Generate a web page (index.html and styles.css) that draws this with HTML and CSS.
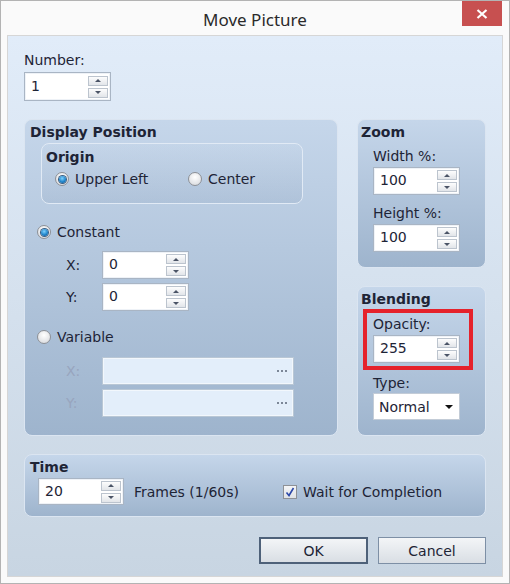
FILE: index.html
```html
<!DOCTYPE html>
<html lang="en">
<head>
  <meta charset="UTF-8">
  <title>Move Picture</title>
  <link rel="stylesheet" href="styles.css">
</head>
<body>
<div class="window">
  <div class="titlebar">
    <span class="title">Move Picture</span>
    <span class="close">
      <svg width="12" height="10" viewBox="0 0 12 10"><path d="M1.5 1 L10.5 9 M10.5 1 L1.5 9" stroke="#fff" stroke-width="2.2" fill="none"/></svg>
    </span>
  </div>
  <div class="client">
    <div class="label">Number:</div>
    <div class="spin number"><span class="val">1</span><span class="arrows"><i class="up"></i><i class="down"></i></span></div>

    <div class="main">
      <div class="group position">
        <div class="gtitle">Display Position</div>
        <div class="group origin">
          <div class="gtitle">Origin</div>
          <div class="radios">
            <span class="radio first"><span class="dot on"></span>Upper Left</span>
            <span class="radio"><span class="dot"></span>Center</span>
          </div>
        </div>
        <div class="radio mode constant"><span class="dot on"></span>Constant</div>
        <div class="coords">
          <div class="coord"><span class="axis">X:</span><div class="spin"><span class="val">0</span><span class="arrows"><i class="up"></i><i class="down"></i></span></div></div>
          <div class="coord"><span class="axis">Y:</span><div class="spin"><span class="val">0</span><span class="arrows"><i class="up"></i><i class="down"></i></span></div></div>
        </div>
        <div class="radio mode variable"><span class="dot"></span>Variable</div>
        <div class="coords fields">
          <div class="coord off"><span class="axis">X:</span><div class="pick"><svg width="10" height="3" viewBox="0 0 10 3"><rect x="0" y="0" width="2" height="2"/><rect x="4" y="0" width="2" height="2"/><rect x="8" y="0" width="2" height="2"/></svg></div></div>
          <div class="coord off"><span class="axis">Y:</span><div class="pick"><svg width="10" height="3" viewBox="0 0 10 3"><rect x="0" y="0" width="2" height="2"/><rect x="4" y="0" width="2" height="2"/><rect x="8" y="0" width="2" height="2"/></svg></div></div>
        </div>
      </div>

      <div class="side">
        <div class="group zoom">
          <div class="gtitle">Zoom</div>
          <div class="box">
            <div class="label">Width %:</div>
            <div class="spin"><span class="val">100</span><span class="arrows"><i class="up"></i><i class="down"></i></span></div>
            <div class="label next">Height %:</div>
            <div class="spin"><span class="val">100</span><span class="arrows"><i class="up"></i><i class="down"></i></span></div>
          </div>
        </div>
        <div class="group blend">
          <div class="gtitle">Blending</div>
          <div class="box">
            <div class="marked">
              <div class="label">Opacity:</div>
              <div class="spin"><span class="val">255</span><span class="arrows"><i class="up"></i><i class="down"></i></span></div>
            </div>
            <div class="label type">Type:</div>
            <div class="select"><span>Normal</span><i class="caret"></i></div>
          </div>
        </div>
      </div>
    </div>

    <div class="group time">
      <div class="gtitle">Time</div>
      <div class="timerow">
        <div class="spin frames"><span class="val">20</span><span class="arrows"><i class="up"></i><i class="down"></i></span></div>
        <span class="unit">Frames (1/60s)</span>
        <span class="check"><svg width="12" height="12" viewBox="0 0 12 12"><path d="M2.5 6.5 L5 9.5 L9.5 2" stroke="#2c48a8" stroke-width="1.6" fill="none"/></svg></span>
        <span>Wait for Completion</span>
      </div>
    </div>

    <div class="buttons">
      <button class="btn ok">OK</button>
      <button class="btn">Cancel</button>
    </div>
  </div>
</div>
</body>
</html>
```

FILE: styles.css
```css
* {
  margin: 0;
  padding: 0;
  box-sizing: border-box;
}

body {
  font-family: "DejaVu Sans", Verdana, sans-serif;
  font-size: 14px;
  line-height: 16px;
  color: #1e2436;
  background: #fff;
}

.window {
  position: relative;
  width: 510px;
  height: 584px;
  border: 1px solid #b3b3b3;
  background: #fafafa;
}

.titlebar {
  height: 34px;
  padding-top: 3px;
  display: flex;
  align-items: center;
  justify-content: center;
}

.title {
  font-family: "Noto Sans", "Open Sans", sans-serif;
  font-size: 17px;
  line-height: 23px;
  color: #2a2a2a;
}

.close {
  position: absolute;
  top: 0;
  right: 7px;
  width: 40px;
  height: 25px;
  background: #c75050;
  display: flex;
  align-items: center;
  justify-content: center;
}

.client {
  height: 542px;
  margin: 0 6px;
  padding: 16px 16px 0 16px;
  border: 1px solid #d6d6d6;
  background: linear-gradient(#e1ecf9, #c8d5e2);
}

.label {
  line-height: 16px;
  margin-bottom: 3px;
}

/* spin box */
.spin {
  display: flex;
  align-items: center;
  width: 87px;
  height: 28px;
  padding: 0 2px 0 6px;
  border: 1px solid #a9b5c4;
  background: #fff;
  box-shadow: inset 0 0 0 1px #eef2f7;
}

.spin.number {
  height: 29px;
  margin-top: 4px;
}

.spin .val {
  flex: 1;
  margin-top: -2px;
}

.arrows {
  display: flex;
  flex-direction: column;
  gap: 2px;
}

.arrows i {
  display: flex;
  align-items: center;
  justify-content: center;
  width: 20px;
  height: 10px;
  border: 1px solid #bcc4ce;
  background: linear-gradient(#fdfdfd, #e2e5e9);
}

.arrows i::before {
  content: "";
  border-left: 3px solid transparent;
  border-right: 3px solid transparent;
}

.arrows .up::before {
  border-bottom: 3px solid #4b5466;
}

.arrows .down::before {
  border-top: 3px solid #4b5466;
}

/* groups */
.main {
  display: flex;
  gap: 19px;
  margin-top: 18px;
}

.group {
  border: 1px solid #dbe5f1;
  border-radius: 8px;
  background: linear-gradient(#c5d6ea, #9eb4cd);
}

.gtitle {
  font-weight: bold;
  line-height: 16px;
}

.position {
  width: 314px;
  padding: 4px 5px 17px 5px;
}

.origin {
  width: 262px;
  height: 61px;
  margin: 3px 0 0 11px;
  padding: 5px 4px 0 4px;
  border-color: #e1eaf5;
  background: linear-gradient(rgba(255, 255, 255, 0.04), rgba(40, 70, 110, 0.08));
}

.radios {
  display: flex;
  margin: 6px 0 0 9px;
}

.radio {
  display: flex;
  align-items: center;
  gap: 6px;
  line-height: 16px;
}

.radio.first {
  width: 133px;
}

.dot {
  width: 14px;
  height: 14px;
  border-radius: 50%;
  border: 1px solid #8d9096;
  background: radial-gradient(circle at 50% 35%, #ffffff, #d4d6da);
  display: flex;
  align-items: center;
  justify-content: center;
}

.dot.on::after {
  content: "";
  width: 7px;
  height: 7px;
  border-radius: 50%;
  background: radial-gradient(circle at 45% 35%, #7fd2ff, #1a7fc6 60%, #0d4a86);
  box-shadow: 0 0 0 1px #3a5f85;
}

.mode {
  margin-left: 7px;
}

.constant {
  margin-top: 20px;
}

.variable {
  margin-top: 18px;
}

.coords {
  display: flex;
  flex-direction: column;
  gap: 4px;
  margin: 11px 0 0 36px;
}

.coords.fields {
  margin-top: 12px;
}

.coord {
  display: flex;
  align-items: center;
}

.axis {
  width: 36px;
}

.coord.off .axis {
  color: #98a5be;
}

.pick {
  width: 192px;
  height: 28px;
  padding-right: 6px;
  display: flex;
  align-items: center;
  justify-content: flex-end;
  border: 1px solid #b9c7d5;
  background: #e3eefa;
  box-shadow: inset 0 0 0 1px #f2f7fc;
}

.pick svg {
  fill: #7c8797;
}

.side {
  width: 129px;
  display: flex;
  flex-direction: column;
  gap: 18px;
}

.zoom {
  height: 149px;
  padding: 4px 3px;
}

.blend {
  height: 150px;
  padding: 4px 3px;
}

.box {
  margin: 8px 0 0 12px;
}

.label.next {
  margin-top: 10px;
}

.blend .box {
  margin-top: 9px;
}

.marked {
  position: relative;
}

.marked::after {
  content: "";
  position: absolute;
  top: -7px;
  bottom: -7px;
  left: -10px;
  right: 9px;
  border: 4px solid #e5222b;
}

.label.type {
  margin-top: 12px;
  margin-bottom: 2px;
}

.select {
  width: 87px;
  height: 27px;
  padding: 0 6px 0 5px;
  display: flex;
  align-items: center;
  justify-content: space-between;
  border: 1px solid #c3ccd7;
  background: #fff;
}

.caret {
  border-left: 4px solid transparent;
  border-right: 4px solid transparent;
  border-top: 4px solid #111;
}

/* time */
.time {
  width: 462px;
  margin-top: 18px;
  padding: 4px 5px 11px 5px;
}

.timerow {
  display: flex;
  align-items: center;
  margin: 3px 0 0 8px;
}

.spin.frames {
  width: 86px;
  height: 27px;
}

.unit {
  width: 149px;
  margin-left: 10px;
}

.check {
  width: 14px;
  height: 14px;
  margin-right: 6px;
  border: 1px solid #8e9196;
  background: linear-gradient(#f4f5f7, #dfe2e6);
  display: flex;
  align-items: center;
  justify-content: center;
}

/* buttons */
.buttons {
  display: flex;
  justify-content: flex-end;
  gap: 10px;
  margin-top: 20px;
}

.btn {
  width: 108px;
  height: 27px;
  font: inherit;
  color: #1e2436;
  border: 1px solid #7d8fa5;
  background: linear-gradient(#f3f5f7, #d9dee4);
}

.btn.ok {
  width: 109px;
  border: 2px solid #4e6179;
}
```
